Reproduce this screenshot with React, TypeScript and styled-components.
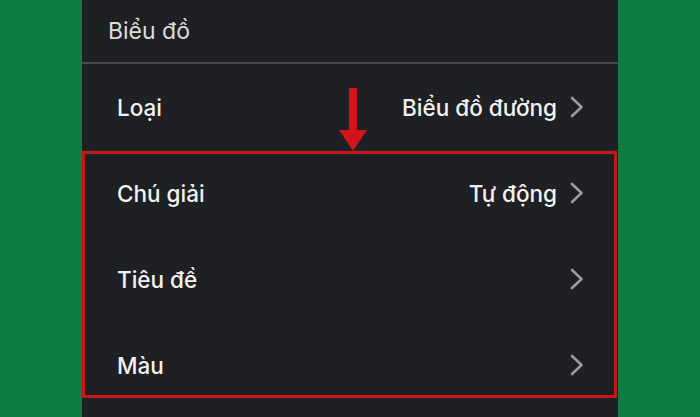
import React from 'react';
import styled, { createGlobalStyle } from 'styled-components';

const GlobalStyle = createGlobalStyle`
  html, body {
    margin: 0;
    padding: 0;
    background: #107c41;
  }
  body {
    font-family: Inter, "Noto Sans", "Liberation Sans", sans-serif;
    -webkit-font-smoothing: antialiased;
  }
`;

const Page = styled.div`
  display: flex;
  justify-content: center;
  height: 417px;
  overflow: hidden;
`;

const Panel = styled.div`
  position: relative;
  width: 536px;
  background: #1f2023;
  display: flex;
  flex-direction: column;
`;

const Header = styled.div`
  height: 62px;
  padding-left: 26px;
  display: flex;
  align-items: center;
  border-bottom: 2px solid #4b4b4e;
  font-size: 23px;
  font-weight: 400;
  color: #dcdcdc;
`;

const Row = styled.div`
  height: 86px;
  flex-shrink: 0;
  display: flex;
  align-items: center;
  padding: 0 34px 0 35px;
  gap: 13px;
`;

const Label = styled.span`
  flex: 1;
  font-size: 22.5px;
  font-weight: 500;
  color: #f2f2f2;
`;

const Value = styled.span`
  font-size: 22.5px;
  font-weight: 500;
  color: #f2f2f2;
`;

const Highlight = styled.div`
  position: absolute;
  left: 0;
  top: 151px;
  width: 535px;
  height: 247px;
  box-sizing: border-box;
  border: 3px solid #c8161b;
  pointer-events: none;
`;

const Arrow = styled.svg`
  position: absolute;
  left: 257px;
  top: 88px;
`;

const Chevron: React.FC = () => (
  <svg width="14" height="22" viewBox="0 0 14 22" fill="none">
    <path d="M2 2 L11.5 11 L2 20" stroke="#9b9b9f" strokeWidth="2.6" strokeLinecap="round" strokeLinejoin="round" />
  </svg>
);

type Item = { label: string; value?: string };

const items: Item[] = [
  { label: 'Loại', value: 'Biểu đồ đường' },
  { label: 'Chú giải', value: 'Tự động' },
  { label: 'Tiêu đề' },
  { label: 'Màu' },
];

const App: React.FC = () => {
  return (
    <>
      <GlobalStyle />
      <Page>
        <Panel>
          <Header>Biểu đồ</Header>
          {items.map((item) => (
            <Row key={item.label}>
              <Label>{item.label}</Label>
              {item.value && <Value>{item.value}</Value>}
              <Chevron />
            </Row>
          ))}
          <Highlight />
          <Arrow width="28" height="64" viewBox="0 0 28 64">
            <rect x="10" y="0" width="8" height="44" fill="#d0141a" />
            <polygon points="0,42 28,42 14,63" fill="#d0141a" />
          </Arrow>
        </Panel>
      </Page>
    </>
  );
};

export default App;
